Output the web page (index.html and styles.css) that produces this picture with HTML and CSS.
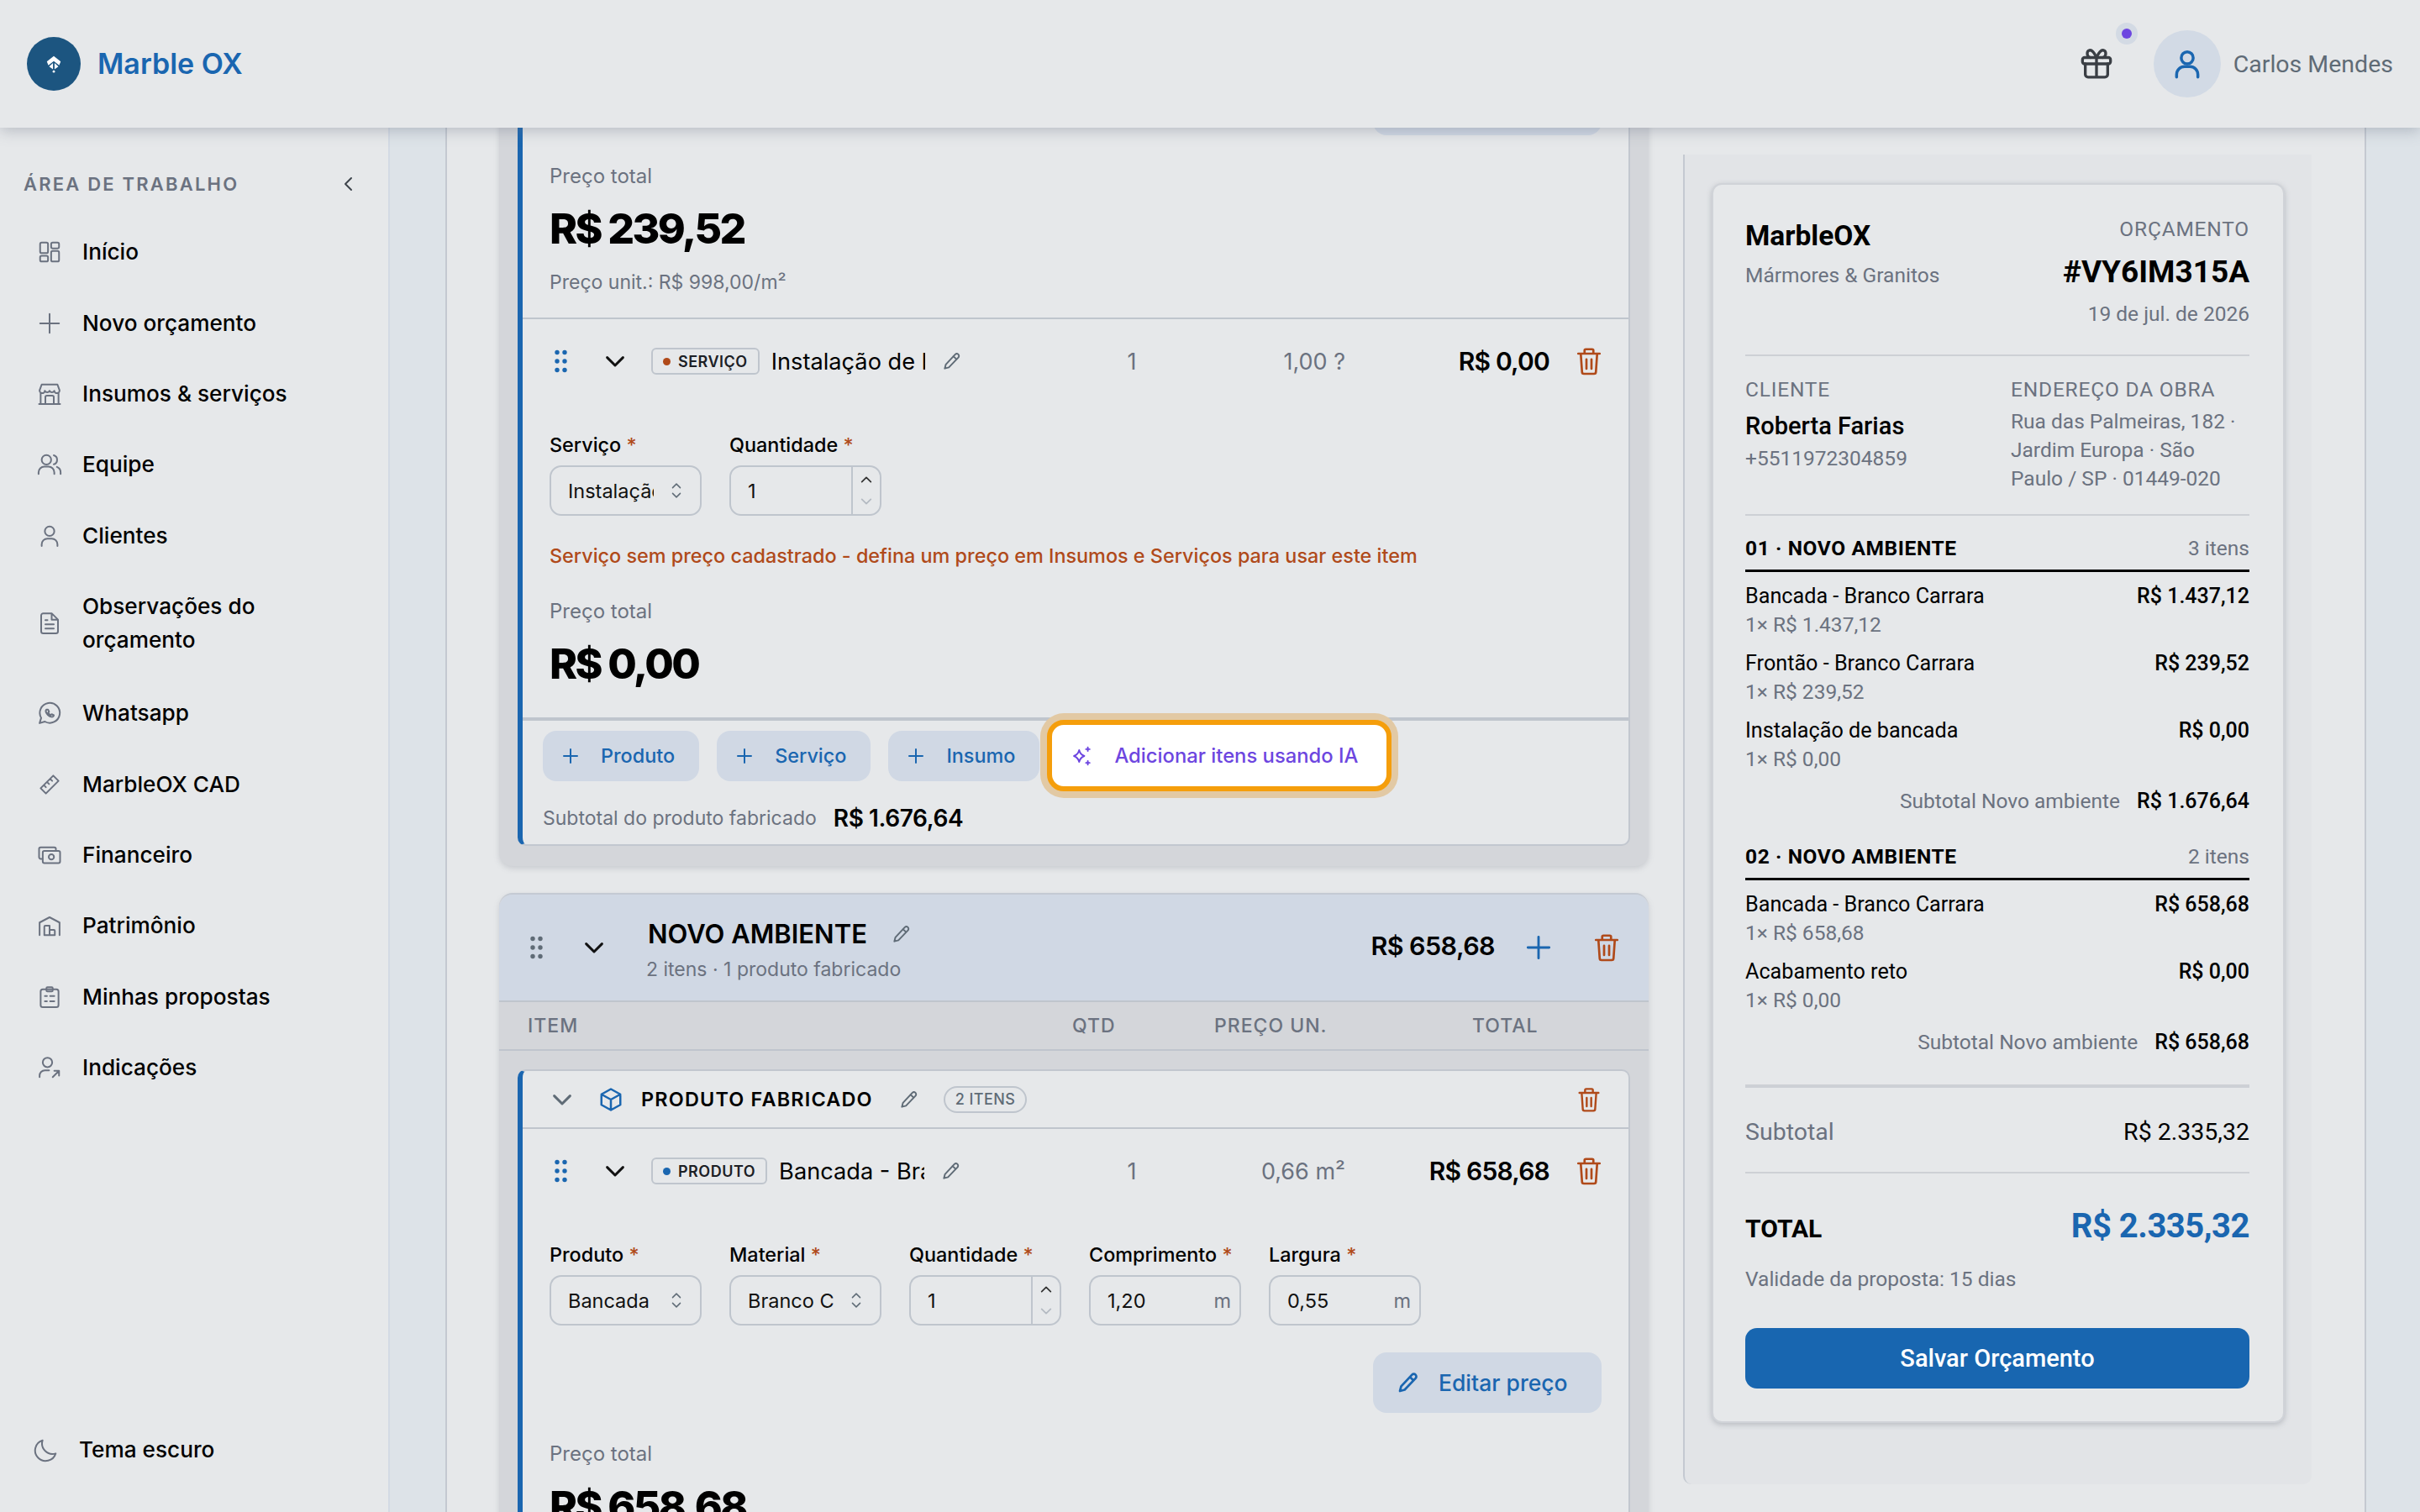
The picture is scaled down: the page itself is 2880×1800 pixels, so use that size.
FILE: index.html
```html
<!DOCTYPE html>
<html lang="pt-BR">
<head>
  <meta charset="utf-8">
  <title>Marble OX - Novo orçamento</title>
  <link rel="stylesheet" href="styles.css">
</head>
<body>
  <svg class="sprite" aria-hidden="true">
    <symbol id="i-trash" viewBox="0 0 24 24"><path d="M3.500 6h17M8.500 6V3.500a1 1 0 0 1 1-1h5a1 1 0 0 1 1 1V6M5.500 6l1 14.500a1.500 1.500 0 0 0 1.500 1.500h8a1.500 1.500 0 0 0 1.500-1.500l1-14.500M10 10.500v7.500M14 10.500v7.500"/></symbol>
    <symbol id="i-pencil" viewBox="0 0 24 24"><path d="M15.500 4.500a2.400 2.400 0 0 1 3.400 3.400L8.500 18.800 4 20l1.200-4.500zM13.500 6.500l3.500 3.500"/></symbol>
    <symbol id="i-chev" viewBox="0 0 24 24"><path d="M4.500 8.500 12 16l7.500-7.500"/></symbol>
    <symbol id="i-plus" viewBox="0 0 24 24"><path d="M12 4v16M4 12h16"/></symbol>
    <symbol id="i-grip" viewBox="0 0 18 28"><circle cx="4" cy="3.500" r="2.700"/><circle cx="13" cy="3.500" r="2.700"/><circle cx="4" cy="14" r="2.700"/><circle cx="13" cy="14" r="2.700"/><circle cx="4" cy="24.500" r="2.700"/><circle cx="13" cy="24.500" r="2.700"/></symbol>
    <symbol id="i-updown" viewBox="0 0 16 24"><path d="M4 9l4-4 4 4M4 15l4 4 4-4"/></symbol>
    <symbol id="i-step-up" viewBox="0 0 12 12"><path d="M2 8l4-4 4 4"/></symbol>
    <symbol id="i-step-down" viewBox="0 0 12 12"><path d="M2 4l4 4 4-4"/></symbol>
  </svg>

  <header class="topbar">
    <div class="brand">
      <span class="brand-mark">
        <svg viewBox="0 0 24 24"><path d="M12 2 21 9l-2 5-7-5.500L5 14 3 9z"/><path d="M11 11v8l-5-3.500zM13 11v8l5-3.500z"/><circle cx="12" cy="22" r="1.500"/></svg>
      </span>
      <span class="brand-name">Marble OX</span>
    </div>
    <div class="top-actions">
      <button class="gift-btn">
        <svg class="ico-gift" viewBox="0 0 24 24"><rect x="2" y="7.500" width="20" height="4.500" rx="1.500"/><path d="M4 12v7.500A2 2 0 0 0 6 21.500h12a2 2 0 0 0 2-2V12M12 7.500v14M12 7.500C10 3 8.500 2 7 2.300c-2.200.5-2.200 4.500.5 5.200M12 7.500C14 3 15.500 2 17 2.300c2.200.5 2.200 4.500-.5 5.200"/></svg>
        <span class="gift-dot"></span>
      </button>
      <span class="avatar">
        <svg viewBox="0 0 24 24"><circle cx="12" cy="7.500" r="4.500"/><path d="M4 22v-2a6 6 0 0 1 6-6h4a6 6 0 0 1 6 6v2"/></svg>
      </span>
      <span class="user-name">Carlos Mendes</span>
    </div>
  </header>

  <div class="layout">
    <aside class="sidebar">
      <div class="side-head">
        <span>ÁREA DE TRABALHO</span>
        <svg class="side-collapse" viewBox="0 0 24 24"><path d="M15 5l-7 7 7 7"/></svg>
      </div>
      <nav class="side-nav">
        <a class="nav-item"><svg viewBox="0 0 24 24"><rect x="3" y="3" width="7.500" height="10" rx="1.500"/><rect x="13.500" y="3" width="7.500" height="5.500" rx="1.500"/><rect x="13.500" y="11" width="7.500" height="10" rx="1.500"/><rect x="3" y="15.500" width="7.500" height="5.500" rx="1.500"/></svg><span>Início</span></a>
        <a class="nav-item"><svg viewBox="0 0 24 24"><path d="M12 3v18M3 12h18"/></svg><span>Novo orçamento</span></a>
        <a class="nav-item"><svg viewBox="0 0 24 24"><path d="M2 21.500h20M3.500 21.500V11M20.500 21.500V11M4.500 3h15l2 5.500a2.500 2.500 0 0 1-5 .5 2.500 2.500 0 0 1-4.500 0 2.500 2.500 0 0 1-4.500 0 2.500 2.500 0 0 1-5-.5zM8 21.500V15a1.500 1.500 0 0 1 1.500-1.500h5A1.500 1.500 0 0 1 16 15v6.500"/></svg><span>Insumos &amp; serviços</span></a>
        <a class="nav-item"><svg viewBox="0 0 24 24"><circle cx="9" cy="7.500" r="4.500"/><path d="M1.500 21v-1.500a5.500 5.500 0 0 1 5.500-5.500h4a5.500 5.500 0 0 1 5.500 5.500V21M16 3.200a4.500 4.500 0 0 1 0 8.600M19 14.300a5.500 5.500 0 0 1 3.500 5.200V21"/></svg><span>Equipe</span></a>
        <a class="nav-item"><svg viewBox="0 0 24 24"><circle cx="12" cy="7.500" r="4.500"/><path d="M4.500 21.500v-1.500a5.500 5.500 0 0 1 5.500-5.500h4a5.500 5.500 0 0 1 5.500 5.500v1.500"/></svg><span>Clientes</span></a>
        <a class="nav-item tall"><svg viewBox="0 0 24 24"><path d="M14 2.500H6a2 2 0 0 0-2 2v15a2 2 0 0 0 2 2h12a2 2 0 0 0 2-2v-11zM14 2.500v6h6M8 13h8M8 17h8M8 9h2"/></svg><span>Observações do orçamento</span></a>
        <a class="nav-item"><svg viewBox="0 0 24 24"><path d="M2.500 21.500l1.500-5A9.500 9.500 0 1 1 7.500 20zM9 8.500c-.8.800-.8 2.200.3 3.800 1.200 1.800 3 3 4.500 3.200 1.200.2 2.200-.5 2.200-1.500l-2-1-1 .8c-1-.5-1.800-1.300-2.300-2.300l.8-1-1-2z"/></svg><span>Whatsapp</span></a>
        <a class="nav-item"><svg viewBox="0 0 24 24"><path d="M15.500 3.500 20.500 8.500 8.500 20.500 3.500 15.500zM12.500 6.500l2 2M9.500 9.500l2 2M6.500 12.500l2 2"/></svg><span>MarbleOX CAD</span></a>
        <a class="nav-item"><svg viewBox="0 0 24 24"><path d="M18 6.500V6a1.500 1.500 0 0 0-1.500-1.500h-13A1.500 1.500 0 0 0 2 6v8a1.500 1.500 0 0 0 1.500 1.500H5"/><rect x="5.500" y="8" width="16.500" height="11.500" rx="1.500"/><circle cx="13.700" cy="13.700" r="2.500"/></svg><span>Financeiro</span></a>
        <a class="nav-item"><svg viewBox="0 0 24 24"><path d="M2.500 21V9l9.500-5 9.500 5v12M7 21V13a1 1 0 0 1 1-1h4v9M12 16h4a1 1 0 0 1 1 1v4M7 21h10"/></svg><span>Patrimônio</span></a>
        <a class="nav-item"><svg viewBox="0 0 24 24"><rect x="3.500" y="4.500" width="17" height="17" rx="2"/><rect x="9" y="2.500" width="6" height="4" rx="1"/><path d="M7.500 11h2M12.500 11h4M7.500 16h2M12.500 16h4"/></svg><span>Minhas propostas</span></a>
        <a class="nav-item"><svg viewBox="0 0 24 24"><circle cx="10" cy="7" r="4.500"/><path d="M2.500 21v-1.500a5 5 0 0 1 5-5h4M15 21l6-6M16.500 15H21v4.500"/></svg><span>Indicações</span></a>
      </nav>
      <a class="theme-toggle"><svg viewBox="0 0 24 24"><path d="M21 15.500A10 10 0 0 1 8.500 3a10 10 0 1 0 12.500 12.500z"/></svg><span>Tema escuro</span></a>
    </aside>

    <main class="page">
      <div class="builder">
        <section class="env">
          <div class="item-card first">
            <div class="item-body">
              <div class="price-edit top-clip"><button class="edit-price"><svg class="ico"><use href="#i-pencil"/></svg>Editar preço</button></div>
              <div class="total-label">Preço total</div>
              <div class="total-value">R$ 239,52</div>
              <div class="unit-note">Preço unit.: R$ 998,00/m²</div>
            </div>

            <div class="item-row">
              <svg class="ico-grip blue"><use href="#i-grip"/></svg>
              <svg class="ico-chev"><use href="#i-chev"/></svg>
              <span class="chip"><i class="chip-dot red"></i>SERVIÇO</span>
              <span class="item-name wide">Instalação de bancada</span>
              <svg class="ico-pencil"><use href="#i-pencil"/></svg>
              <span class="col-qty">1</span>
              <span class="col-unit">1,00 ?</span>
              <strong class="col-total">R$ 0,00</strong>
              <svg class="ico-trash"><use href="#i-trash"/></svg>
            </div>
            <div class="item-body second">
              <div class="fields">
                <div class="field">
                  <label>Serviço <b>*</b></label>
                  <div class="control"><span class="control-val short">Instalação de bancada</span><svg class="ico-updown"><use href="#i-updown"/></svg></div>
                </div>
                <div class="field">
                  <label>Quantidade <b>*</b></label>
                  <div class="control numeric"><span class="control-val">1</span><span class="stepper"><svg><use href="#i-step-up"/></svg><svg class="off"><use href="#i-step-down"/></svg></span></div>
                </div>
              </div>
              <p class="warn">Serviço sem preço cadastrado - defina um preço em Insumos e Serviços para usar este item</p>
              <div class="total-label">Preço total</div>
              <div class="total-value">R$ 0,00</div>
            </div>

            <div class="card-foot">
              <div class="add-row">
                <button class="add-btn"><svg class="ico"><use href="#i-plus"/></svg>Produto</button>
                <button class="add-btn"><svg class="ico"><use href="#i-plus"/></svg>Serviço</button>
                <button class="add-btn"><svg class="ico"><use href="#i-plus"/></svg>Insumo</button>
                <button class="ai-btn">
                  <svg class="ico-spark" viewBox="0 0 24 24"><path d="M9.500 5.500c.8 3.500 2.200 5.200 5.700 6.500-3.500 1.300-4.900 3-5.700 6.500-.8-3.500-2.200-5.200-5.700-6.500 3.500-1.300 4.900-3 5.700-6.500zM19 2.500v4M17 4.500h4M19 17.500v4M17 19.500h4"/></svg>
                  Adicionar itens usando IA
                </button>
              </div>
              <div class="subtotal-row"><span>Subtotal do produto fabricado</span><strong>R$ 1.676,64</strong></div>
            </div>
          </div>
        </section>

        <section class="env second">
          <div class="env-head">
            <svg class="ico-grip"><use href="#i-grip"/></svg>
            <svg class="ico-chev"><use href="#i-chev"/></svg>
            <div class="env-title">
              <div class="env-name"><span>NOVO AMBIENTE</span><svg class="ico-pencil"><use href="#i-pencil"/></svg></div>
              <div class="env-meta">2 itens · 1 produto fabricado</div>
            </div>
            <strong class="env-total">R$ 658,68</strong>
            <svg class="ico-plus"><use href="#i-plus"/></svg>
            <svg class="ico-trash"><use href="#i-trash"/></svg>
          </div>
          <div class="env-cols">
            <span>ITEM</span>
            <span>QTD</span>
            <span>PREÇO UN.</span>
            <span>TOTAL</span>
          </div>
          <div class="item-card">
            <div class="group-head">
              <svg class="ico-chev grey"><use href="#i-chev"/></svg>
              <svg class="ico-cube" viewBox="0 0 24 24"><path d="M12 2 21 7v10l-9 5-9-5V7zM3 7l9 5 9-5M12 12v10"/></svg>
              <span class="group-name">PRODUTO FABRICADO</span>
              <svg class="ico-pencil"><use href="#i-pencil"/></svg>
              <span class="count-pill">2 ITENS</span>
              <svg class="ico-trash small"><use href="#i-trash"/></svg>
            </div>
            <div class="item-row">
              <svg class="ico-grip blue"><use href="#i-grip"/></svg>
              <svg class="ico-chev"><use href="#i-chev"/></svg>
              <span class="chip"><i class="chip-dot blue"></i>PRODUTO</span>
              <span class="item-name">Bancada - Branco Carrara</span>
              <svg class="ico-pencil"><use href="#i-pencil"/></svg>
              <span class="col-qty">1</span>
              <span class="col-unit">0,66 m²</span>
              <strong class="col-total">R$ 658,68</strong>
              <svg class="ico-trash"><use href="#i-trash"/></svg>
            </div>
            <div class="item-body second">
              <div class="fields">
                <div class="field">
                  <label>Produto <b>*</b></label>
                  <div class="control"><span class="control-val short">Bancada</span><svg class="ico-updown"><use href="#i-updown"/></svg></div>
                </div>
                <div class="field">
                  <label>Material <b>*</b></label>
                  <div class="control"><span class="control-val short">Branco Carrara</span><svg class="ico-updown"><use href="#i-updown"/></svg></div>
                </div>
                <div class="field">
                  <label>Quantidade <b>*</b></label>
                  <div class="control numeric"><span class="control-val">1</span><span class="stepper"><svg><use href="#i-step-up"/></svg><svg class="off"><use href="#i-step-down"/></svg></span></div>
                </div>
                <div class="field">
                  <label>Comprimento <b>*</b></label>
                  <div class="control"><span class="control-val">1,20</span><span class="unit">m</span></div>
                </div>
                <div class="field">
                  <label>Largura <b>*</b></label>
                  <div class="control"><span class="control-val">0,55</span><span class="unit">m</span></div>
                </div>
              </div>
              <div class="price-edit"><button class="edit-price"><svg class="ico"><use href="#i-pencil"/></svg>Editar preço</button></div>
              <div class="total-label">Preço total</div>
              <div class="total-value">R$ 658,68</div>
            </div>
          </div>
        </section>
      </div>

      <div class="quote-panel">
        <div class="quote">
          <div class="q-top">
            <div>
              <div class="q-company">MarbleOX</div>
              <div class="q-muted q-tagline">Mármores &amp; Granitos</div>
            </div>
            <div class="q-id">
              <div class="q-label">ORÇAMENTO</div>
              <div class="q-number">#VY6IM315A</div>
              <div class="q-muted">19 de jul. de 2026</div>
            </div>
          </div>
          <div class="q-client">
            <div>
              <div class="q-label">CLIENTE</div>
              <div class="q-client-name">Roberta Farias</div>
              <div class="q-muted">+5511972304859</div>
            </div>
            <div>
              <div class="q-label">ENDEREÇO DA OBRA</div>
              <div class="q-muted q-address">Rua das Palmeiras, 182 · Jardim Europa · São Paulo / SP · 01449-020</div>
            </div>
          </div>

          <div class="q-env-head"><strong>01 · NOVO AMBIENTE</strong><span>3 itens</span></div>
          <div class="q-line"><div><div class="q-line-name">Bancada - Branco Carrara</div><div class="q-muted">1× R$ 1.437,12</div></div><strong>R$ 1.437,12</strong></div>
          <div class="q-line"><div><div class="q-line-name">Frontão - Branco Carrara</div><div class="q-muted">1× R$ 239,52</div></div><strong>R$ 239,52</strong></div>
          <div class="q-line"><div><div class="q-line-name">Instalação de bancada</div><div class="q-muted">1× R$ 0,00</div></div><strong>R$ 0,00</strong></div>
          <div class="q-env-sub"><span>Subtotal Novo ambiente</span><strong>R$ 1.676,64</strong></div>

          <div class="q-env-head"><strong>02 · NOVO AMBIENTE</strong><span>2 itens</span></div>
          <div class="q-line"><div><div class="q-line-name">Bancada - Branco Carrara</div><div class="q-muted">1× R$ 658,68</div></div><strong>R$ 658,68</strong></div>
          <div class="q-line"><div><div class="q-line-name">Acabamento reto</div><div class="q-muted">1× R$ 0,00</div></div><strong>R$ 0,00</strong></div>
          <div class="q-env-sub"><span>Subtotal Novo ambiente</span><strong>R$ 658,68</strong></div>

          <div class="q-subtotal"><span>Subtotal</span><span>R$ 2.335,32</span></div>
          <div class="q-total"><strong>TOTAL</strong><strong class="q-total-val">R$ 2.335,32</strong></div>
          <div class="q-muted">Validade da proposta: 15 dias</div>
          <button class="q-save">Salvar Orçamento</button>
        </div>
      </div>
    </main>
  </div>
</body>
</html>
```

FILE: styles.css
```css
* {
  box-sizing: border-box;
}

html,
body {
  margin: 0;
  height: 1800px;
  overflow: hidden;
}

body {
  font-family: Inter, "Noto Sans", sans-serif;
  background-color: #dde3e8;
  color: #000;
  font-size: 26.200px;
}

button {
  font-family: inherit;
  border: none;
  cursor: pointer;
}

svg {
  flex-shrink: 0;
  fill: none;
  stroke: currentColor;
  stroke-linecap: round;
  stroke-linejoin: round;
}

.sprite {
  display: none;
}

/* top bar */
.topbar {
  position: relative;
  z-index: 2;
  height: 152px;
  display: flex;
  align-items: center;
  justify-content: space-between;
  padding: 0 32px 0 32px;
  background-color: #e6e8ea;
  box-shadow: 0 4px 16px rgba(100, 110, 125, 0.35);
}

.brand {
  display: flex;
  align-items: center;
  gap: 20px;
}

.brand-mark {
  width: 64px;
  height: 64px;
  border-radius: 50%;
  background-color: #1c5580;
  display: flex;
  align-items: center;
  justify-content: center;
}

.brand-mark svg {
  fill: #fff;
  stroke: none;
  width: 22px;
  height: 22px;
}

.brand-name {
  font-size: 34px;
  font-weight: 600;
  color: #1a66b0;
  margin-top: -2px;
}

.top-actions {
  display: flex;
  align-items: center;
}

.gift-btn {
  position: relative;
  width: 72px;
  height: 72px;
  margin-right: 32px;
  background: none;
  display: flex;
  align-items: center;
  justify-content: center;
  color: #3a3e44;
  padding: 0;
}

.ico-gift {
  width: 40px;
  height: 40px;
  stroke-width: 2;
}

.gift-dot {
  position: absolute;
  top: -6px;
  right: -6px;
  width: 12px;
  height: 12px;
  border-radius: 50%;
  background-color: #6d46e0;
  box-shadow: 0 0 0 7px #d3dae4;
}

.avatar {
  width: 80px;
  height: 80px;
  border-radius: 50%;
  background-color: #d2dae5;
  display: flex;
  align-items: center;
  justify-content: center;
  color: #1a66b0;
  margin-right: 15px;
}

.avatar svg {
  width: 38px;
  height: 38px;
  stroke-width: 2.2;
}

.user-name {
  font-family: Roboto, sans-serif;
  color: #5f6b76;
  font-size: 28.500px;
}

/* layout */
.layout {
  display: flex;
  height: 1648px;
  overflow: hidden;
}

.sidebar {
  width: 464px;
  flex-shrink: 0;
  background-color: #e6e8ea;
  border-right: 2px solid #d3dae4;
  display: flex;
  flex-direction: column;
  padding: 52px 28px 54px;
}

.side-head {
  display: flex;
  align-items: center;
  justify-content: space-between;
  height: 30px;
  font-size: 22px;
  font-weight: 600;
  letter-spacing: 2.2px;
  color: #6b7280;
  padding-right: 7px;
  margin-bottom: 24px;
}

.side-collapse {
  width: 24px;
  height: 24px;
  stroke: #3f454d;
  stroke-width: 2;
}

.nav-item {
  display: flex;
  align-items: center;
  gap: 24px;
  padding: 22.2px 16px;
  line-height: 40px;
  font-weight: 500;
}

.nav-item.tall {
  padding-bottom: 25px;
}

.nav-item svg {
  width: 30px;
  height: 30px;
  stroke: #6b7280;
  stroke-width: 1.6;
}

.nav-item span {
  max-width: 300px;
}

.theme-toggle {
  margin-top: auto;
  display: flex;
  align-items: center;
  gap: 24px;
  font-weight: 500;
  padding-left: 12px;
  line-height: 40px;
}

.theme-toggle svg {
  width: 30px;
  height: 30px;
  stroke: #6b7280;
  stroke-width: 1.6;
}

.page {
  flex: 1;
  margin: 0 64px 0 66px;
  background-color: #e6e8ea;
  border-left: 2px solid #c4c9d1;
  border-right: 2px solid #c4c9d1;
  display: flex;
  gap: 41px;
  padding-left: 62px;
  overflow: hidden;
  min-width: 0;
}

.builder {
  width: 1368px;
  flex-shrink: 0;
}

/* environment sections */
.env {
  background-color: #d4d6da;
  border-radius: 0 0 16px 16px;
  padding: 0 22px 24px;
  box-shadow: 0 3px 6px rgba(120, 125, 135, 0.25);
}

.env.second {
  margin-top: 32px;
  padding: 0 22px;
  border-radius: 16px 16px 0 0;
  border-top: 2px solid #c4cad3;
}

.item-card {
  background-color: #e6e8ea;
  border: 2px solid #c2c7cf;
  border-left: 6px solid #1a66b0;
  border-radius: 10px;
}

.item-card.first {
  border-top: none;
  border-radius: 0 0 10px 10px;
}

.item-body {
  padding: 0 32px 0 32px;
}

.item-body.second {
  padding-top: 32px;
}

.price-edit {
  display: flex;
  justify-content: flex-end;
  margin-top: 32px;
}

.top-clip {
  margin-top: -63px;
}

.edit-price {
  width: 272px;
  height: 72px;
  background-color: #d0d8e4;
  color: #1a66b0;
  font-size: 26.500px;
  font-weight: 500;
  border-radius: 16px;
  display: flex;
  align-items: center;
  gap: 21px;
  padding: 0 0 0 27px;
}

.edit-price .ico {
  width: 30px;
  height: 30px;
  stroke-width: 2.2;
}

.total-label {
  font-size: 24px;
  line-height: 36px;
  color: #6b7280;
  margin-top: 31px;
}

.total-value {
  font-size: 50px;
  font-weight: 800;
  line-height: 68px;
  letter-spacing: -2.6px;
  margin-top: 10px;
}

.unit-note {
  font-size: 23px;
  line-height: 32px;
  color: #6b7280;
  margin-top: 14px;
  padding-bottom: 26px;
}

.item-row {
  display: flex;
  align-items: center;
  height: 102px;
  padding: 0 29px 0 37px;
  border-top: 2px solid #bfc5cd;
}

.group-head + .item-row {
  height: 100px;
  border-top: none;
}

.ico-grip {
  width: 18px;
  height: 28px;
  fill: #5f6b76;
  stroke: none;
}

.ico-grip.blue {
  fill: #1a66b0;
}

.ico-chev {
  width: 30px;
  height: 30px;
  stroke: #111;
  stroke-width: 2.4;
  margin-left: 40px;
}

.ico-chev.grey {
  stroke: #5f6b76;
  margin-left: 0;
}

.chip {
  display: flex;
  align-items: center;
  gap: 9px;
  height: 32px;
  padding: 0 12px;
  margin-left: 28px;
  border: 2px solid #bfc5cd;
  border-radius: 6px;
  font-size: 18px;
  font-weight: 600;
  letter-spacing: 0.5px;
  color: #1c2025;
}

.chip-dot {
  width: 9px;
  height: 9px;
  border-radius: 50%;
}

.chip-dot.red {
  background-color: #b04a1a;
}

.chip-dot.blue {
  background-color: #1a66b0;
}

.item-name {
  width: 173px;
  margin-left: 14px;
  font-size: 27.200px;
  white-space: nowrap;
  overflow: hidden;
}

.item-name.wide {
  width: 183px;
}

.ico-pencil {
  width: 26px;
  height: 26px;
  stroke: #5f6b76;
  stroke-width: 1.8;
  margin-left: 19px;
}

.col-qty {
  width: 62px;
  margin-left: auto;
  text-align: center;
  color: #6b7280;
  font-size: 27px;
}

.col-unit {
  width: 223px;
  text-align: right;
  color: #6b7280;
  font-size: 27px;
}

.col-total {
  width: 243px;
  text-align: right;
  font-size: 30px;
  font-weight: 600;
  letter-spacing: -0.8px;
}

.ico-trash {
  margin-left: 29px;
  width: 36px;
  height: 36px;
  stroke: #b04a1a;
  stroke-width: 1.800;
}

.fields {
  display: flex;
  gap: 33px;
}

.field {
  width: 181px;
}

.field label {
  display: block;
  font-size: 23.400px;
  line-height: 36px;
  font-weight: 500;
  white-space: nowrap;
  margin-bottom: 6px;
}

.field label b {
  color: #b04a1a;
  font-weight: 500;
}

.control {
  height: 60px;
  border: 2px solid #bfc5cd;
  border-radius: 14px;
  display: flex;
  align-items: center;
  padding-left: 20px;
  font-size: 23.500px;
  color: #111;
}

.control-val {
  flex: 1;
  overflow: hidden;
  white-space: nowrap;
}

.control-val.short {
  flex: none;
  width: 102px;
}

.ico-updown {
  width: 18px;
  height: 28px;
  stroke: #5f6b76;
  stroke-width: 1.300;
  margin-left: 18px;
}

.unit {
  padding-right: 10px;
  color: #6b7280;
}

.stepper {
  align-self: stretch;
  width: 34px;
  border-left: 2px solid #bfc5cd;
  display: flex;
  flex-direction: column;
  align-items: center;
  justify-content: space-between;
  padding: 7px 0;
}

.stepper svg {
  width: 16px;
  height: 16px;
  stroke: #333;
  stroke-width: 1.300;
}

.stepper svg.off {
  stroke: #b4bac2;
}

.warn {
  margin: 30px 0 0;
  font-size: 23.400px;
  line-height: 36px;
  font-weight: 500;
  color: #b04a1a;
}

.item-body.second .warn + .total-label {
  margin-top: 30px;
}

.card-foot {
  border-top: 4px solid #bfc5cd;
  margin-top: 30px;
  padding: 11px 0 13px 24px;
}

.add-row {
  display: flex;
  gap: 21px;
  align-items: center;
}

.add-btn {
  height: 60px;
  padding: 0 29px 0 21px;
  background-color: #d0d8e4;
  border-radius: 16px;
  color: #1a66b0;
  font-size: 23.400px;
  font-weight: 500;
  display: flex;
  align-items: center;
  gap: 24px;
}

.add-btn .ico {
  width: 24px;
  height: 24px;
  stroke-width: 2;
}

.ai-btn {
  width: 410px;
  height: 85px;
  margin: -12px 0 -12px -12px;
  background-color: #fff;
  border: 6px solid #f59e0b;
  border-radius: 20px;
  box-shadow: 0 0 0 8px #e2c9a4;
  color: #6d46e0;
  font-size: 23.800px;
  font-weight: 500;
  display: flex;
  align-items: center;
  gap: 26px;
  padding: 0 0 0 22px;
}

.ico-spark {
  width: 26px;
  height: 26px;
  stroke-width: 1.800;
}

.subtotal-row {
  display: flex;
  align-items: center;
  gap: 20px;
  margin-top: 26px;
  font-size: 23px;
  line-height: 36px;
  color: #6b7280;
}

.subtotal-row strong {
  color: #000;
  font-size: 28px;
  font-weight: 600;
  letter-spacing: -0.4px;
}

.env-head {
  display: flex;
  align-items: center;
  height: 126px;
  margin: 0 -22px;
  padding: 0 32px 0 36px;
  background-color: #d0d8e4;
  border-radius: 16px 16px 0 0;
}

.env-head .ico-chev {
  margin-left: 44px;
}

.env-title {
  margin-left: 47px;
  margin-top: 6px;
}

.env-name {
  display: flex;
  align-items: center;
  font-size: 31px;
  font-weight: 600;
  line-height: 44px;
  padding-left: 2px;
}

.env-name .ico-pencil {
  margin-left: 28px;
}

.env-meta {
  font-size: 23px;
  line-height: 36px;
  color: #6b7280;
  margin-top: 2px;
}

.env-total {
  margin-left: auto;
  margin-bottom: 6px;
  font-size: 30.500px;
  font-weight: 600;
  letter-spacing: -0.6px;
}

.ico-plus {
  margin-left: 33px;
  width: 38px;
  height: 38px;
  stroke: #1a66b0;
  stroke-width: 1.800;
}

.env-head .ico-trash {
  margin-left: 44px;
}

.env-cols {
  display: grid;
  grid-template-columns: 648px 169px 307px 1fr;
  align-items: center;
  height: 60px;
  margin: 0 -22px 22px;
  padding-left: 34px;
  border-top: 2px solid #bfc5cd;
  border-bottom: 2px solid #bfc5cd;
  color: #6b7280;
  font-size: 23px;
  font-weight: 500;
  letter-spacing: 1px;
}

.group-head {
  display: flex;
  align-items: center;
  height: 69px;
  padding: 0 31px 0 32px;
  border-bottom: 2px solid #bfc5cd;
}

.ico-cube {
  width: 30px;
  height: 30px;
  stroke: #1a66b0;
  stroke-width: 2;
  margin-left: 28px;
}

.group-name {
  margin-left: 21px;
  font-size: 23.400px;
  font-weight: 600;
  letter-spacing: 1.200px;
}

.group-head .ico-pencil {
  margin-left: 30px;
}

.count-pill {
  margin-left: 28px;
  height: 32px;
  padding: 0 12px;
  display: flex;
  align-items: center;
  border: 2px solid #bfc5cd;
  border-radius: 16px;
  font-size: 18px;
  font-weight: 500;
  color: #5f6b76;
  letter-spacing: 0.4px;
}

.ico-trash.small {
  margin-left: auto;
  width: 32px;
  height: 32px;
}

/* quote card */
.quote-panel {
  width: 748px;
  flex-shrink: 0;
  height: 1583px;
  margin-top: 32px;
  background-color: #e2e4e7;
  border-left: 2px solid #c4c9d1;
  border-radius: 0 0 10px 10px;
  padding: 34px 32px 0;
  font-family: Roboto, sans-serif;
}

.quote {
  height: 1476px;
  background-color: #e6e8ea;
  border: 2px solid #d0d3d8;
  border-radius: 12px;
  box-shadow: 0 2px 6px rgba(120, 125, 135, 0.4);
  padding: 36px 40px 0 38px;
  font-size: 24.500px;
  line-height: 34px;
}

.q-muted {
  color: #6b7280;
}

.q-top {
  display: flex;
  justify-content: space-between;
  padding-bottom: 31px;
  border-bottom: 2px solid #cdd0d5;
}

.q-company {
  font-size: 33.500px;
  font-weight: 700;
  line-height: 44px;
  margin-top: 3px;
}

.q-tagline {
  margin-top: 8px;
}

.q-id {
  text-align: right;
}

.q-label {
  color: #6b7280;
  letter-spacing: 0.8px;
}

.q-number {
  font-size: 37px;
  font-weight: 700;
  line-height: 50px;
  margin-top: 9px;
}

.q-id .q-muted {
  margin-top: 8px;
}

.q-client {
  display: grid;
  grid-template-columns: 316px 1fr;
  padding: 23px 0 25px;
  border-bottom: 2px solid #cdd0d5;
}

.q-client-name {
  font-size: 29px;
  font-weight: 500;
  line-height: 38px;
  margin-top: 7px;
}

.q-client-name + .q-muted {
  margin-top: 3px;
}

.q-address {
  margin-top: 4px;
}

.q-env-head {
  display: flex;
  justify-content: space-between;
  align-items: center;
  height: 53px;
  margin-top: 14px;
  border-bottom: 3px solid #000;
}

.q-env-head strong {
  font-weight: 700;
  letter-spacing: 0.6px;
}

.q-env-head span {
  color: #6b7280;
}

.q-line {
  display: flex;
  justify-content: space-between;
  margin-top: 12px;
}

.q-line-name {
  font-size: 25.200px;
}

.q-line strong {
  font-size: 25px;
  font-weight: 500;
}

.q-env-sub {
  display: flex;
  justify-content: flex-end;
  gap: 20px;
  margin-top: 16px;
  margin-bottom: 24px;
  color: #6b7280;
}

.q-env-sub strong {
  color: #000;
  font-size: 25px;
  font-weight: 500;
}

.q-subtotal {
  display: flex;
  justify-content: space-between;
  align-items: center;
  margin-top: 33px;
  height: 106px;
  padding-top: 6px;
  border-top: 4px solid #cdd0d5;
  border-bottom: 2px solid #cdd0d5;
  font-size: 28.500px;
}

.q-subtotal span:first-child {
  color: #6b7280;
}

.q-total {
  display: flex;
  justify-content: space-between;
  align-items: baseline;
  margin-top: 37px;
  margin-bottom: 17px;
  font-size: 30px;
  line-height: 52px;
}

.q-total-val {
  font-size: 40px;
  color: #1a66b0;
  letter-spacing: -0.5px;
}

.q-save {
  width: 100%;
  height: 72px;
  margin-top: 41px;
  background-color: #1866b0;
  color: #fff;
  border-radius: 14px;
  font-size: 29px;
  font-weight: 500;
  font-family: Roboto, sans-serif;
}
```
